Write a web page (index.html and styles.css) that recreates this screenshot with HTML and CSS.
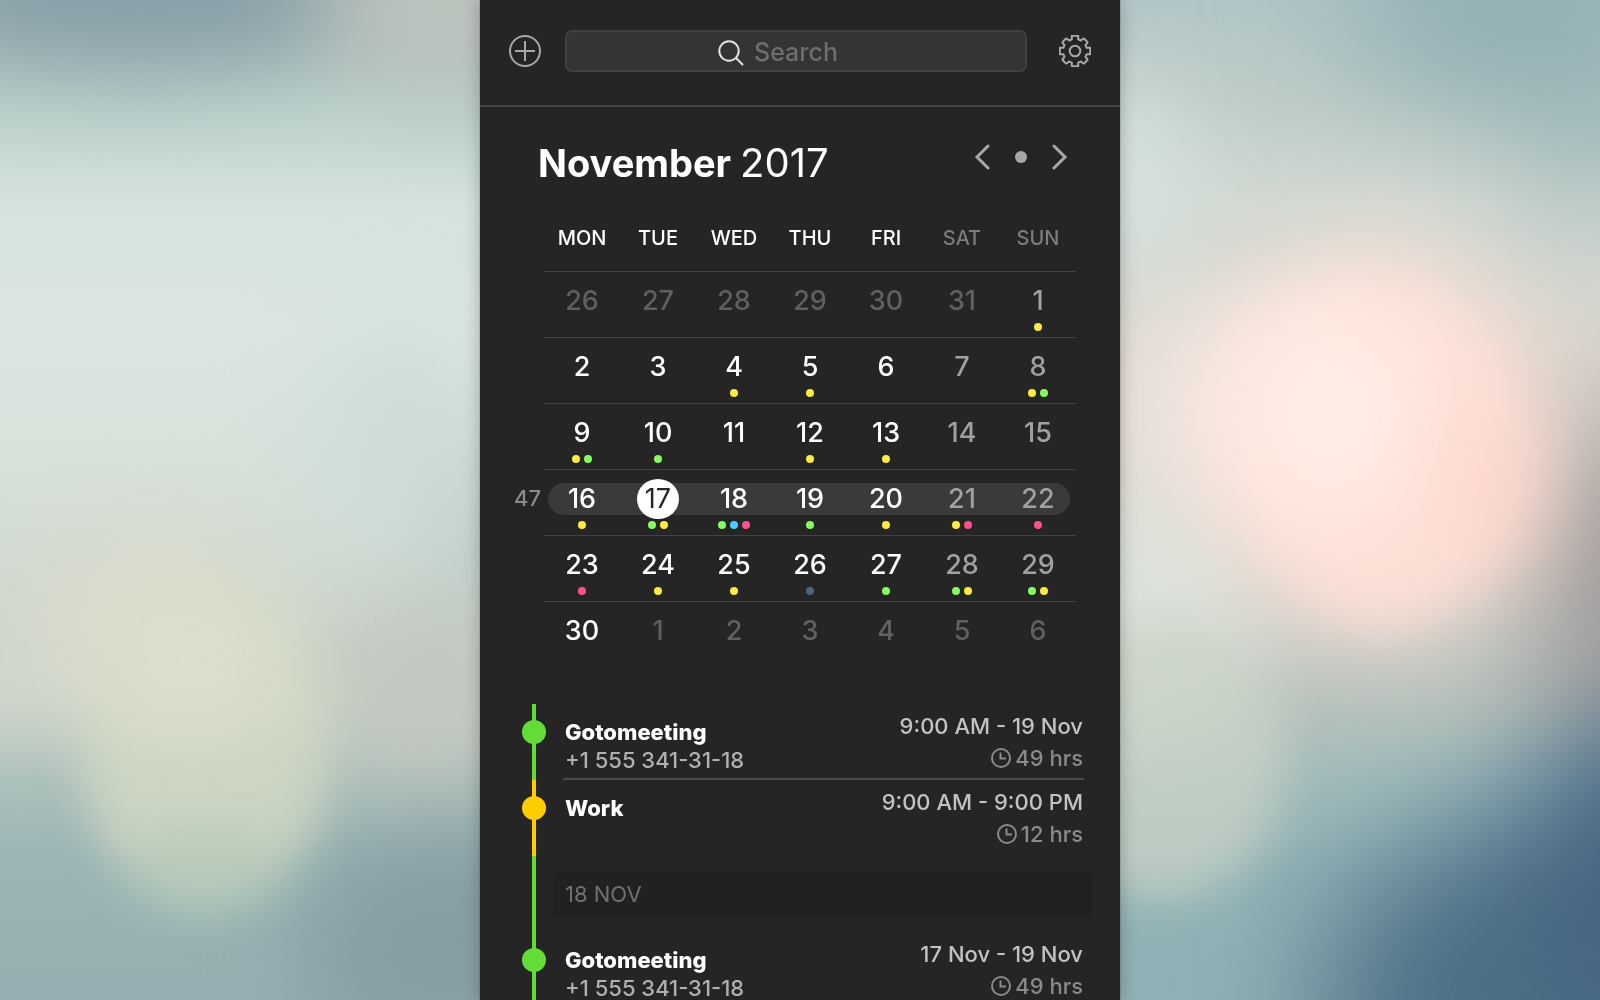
FILE: index.html
```html
<!DOCTYPE html>
<html lang="en">

<head>
    <meta charset="UTF-8">
    <meta name="viewport" content="width=device-width, initial-scale=1.0">
    <title>Calendar</title>
    <link rel="stylesheet" href="styles.css">
</head>

<body>
    <div class="wall">
        <svg viewBox="0 0 480 1000" preserveAspectRatio="none" aria-hidden="true">
            <defs>
                <linearGradient id="baseLeft" x1="0" y1="0" x2="0" y2="1">
                    <stop offset="0" stop-color="#a3b5b6" />
                    <stop offset="0.1" stop-color="#bacfca" />
                    <stop offset="0.2" stop-color="#d4e2dd" />
                    <stop offset="0.33" stop-color="#dce6e1" />
                    <stop offset="0.5" stop-color="#d6dfd7" />
                    <stop offset="0.7" stop-color="#c8d1c8" />
                    <stop offset="0.78" stop-color="#abbfbb" />
                    <stop offset="0.86" stop-color="#9bb5b5" />
                    <stop offset="1" stop-color="#95afb2" />
                </linearGradient>
                <filter id="soft" filterUnits="userSpaceOnUse" x="-300" y="-300" width="1080" height="1600" color-interpolation-filters="sRGB">
                    <feGaussianBlur stdDeviation="45" />
                </filter>
                <filter id="softer" filterUnits="userSpaceOnUse" x="-300" y="-300" width="1080" height="1700" color-interpolation-filters="sRGB">
                    <feGaussianBlur stdDeviation="65" />
                </filter>
                <filter id="disc" filterUnits="userSpaceOnUse" x="-300" y="-300" width="1080" height="1600" color-interpolation-filters="sRGB">
                    <feGaussianBlur stdDeviation="22" />
                </filter>
            </defs>
            <rect width="480" height="1000" fill="url(#baseLeft)" />
            <g filter="url(#soft)">
                <ellipse cx="140" cy="-10" rx="230" ry="75" fill="#859ca6" opacity="0.9" />
                <ellipse cx="450" cy="0" rx="130" ry="90" fill="#bcc3bd" />
                <ellipse cx="400" cy="430" rx="90" ry="120" fill="#cadcda" opacity="0.7" />
                <ellipse cx="490" cy="560" rx="60" ry="110" fill="#b8cac5" opacity="0.6" />
                <ellipse cx="420" cy="690" rx="90" ry="90" fill="#c2c7be" />
                <ellipse cx="450" cy="950" rx="150" ry="120" fill="#879da4" />
                <ellipse cx="20" cy="660" rx="80" ry="70" fill="#cfd6cc" />
                <ellipse cx="140" cy="620" rx="110" ry="80" fill="#dbdccd" />
            </g>
            <g filter="url(#disc)">
                <ellipse cx="205" cy="745" rx="125" ry="165" fill="#d0d8c3" opacity="0.85" />
                <ellipse cx="205" cy="870" rx="80" ry="40" fill="#afc5b6" opacity="0.6" />
            </g>
            <g filter="url(#soft)">
                <ellipse cx="190" cy="660" rx="90" ry="80" fill="#e3e2d0" opacity="0.7" />
            </g>
        </svg>
    </div>

    <main class="panel">
        <header class="toolbar">
            <button type="button" class="icon-btn" aria-label="Add event">
                <svg width="32" height="32" viewBox="-16 -16 32 32">
                    <circle r="15" />
                    <path d="M-10 0H10M0-10V10" />
                </svg>
            </button>
            <div class="search">
                <svg width="26" height="26" viewBox="0 0 26 26">
                    <circle cx="11" cy="11" r="9.7" />
                    <path d="M18 18L25 25" />
                </svg>
                <input type="text" placeholder="Search" aria-label="Search">
            </div>
            <button type="button" class="icon-btn" aria-label="Settings">
                <svg width="32" height="32" viewBox="-16 -16 32 32">
                    <circle r="5.3" />
                    <path d="M-3.2-15.2H3.2V-11.6L5.9-10.5 8-12.3Q8.7-12.8 9.3-12.2L12.2-9.3Q12.8-8.7 12.3-8L10.5-5.9 11.6-3.2H15.2V3.2H11.6L10.5 5.9 12.3 8Q12.8 8.7 12.2 9.3L9.3 12.2Q8.7 12.8 8 12.3L5.9 10.5 3.2 11.6V15.2H-3.2V11.6L-5.9 10.5-8 12.3Q-8.7 12.8-9.3 12.2L-12.2 9.3Q-12.8 8.7-12.3 8L-10.5 5.9-11.6 3.2H-15.2V-3.2H-11.6L-10.5-5.9-12.3-8Q-12.8-8.7-12.2-9.3L-9.3-12.2Q-8.7-12.8-8-12.3L-5.9-10.5-3.2-11.6Z" />
                </svg>
            </button>
        </header>

        <div class="month">
            <h1>November <span>2017</span></h1>
            <div class="month-nav">
                <button type="button" aria-label="Previous month">
                    <svg width="16" height="26" viewBox="0 0 16 26"><path d="M14 2L3 13L14 24" /></svg>
                </button>
                <button type="button" aria-label="Today"><span class="today-dot"></span></button>
                <button type="button" aria-label="Next month">
                    <svg width="16" height="26" viewBox="0 0 16 26"><path d="M2 2L13 13L2 24" /></svg>
                </button>
            </div>
        </div>

        <table class="calendar">
            <thead>
                <tr>
                    <td class="week"></td>
                    <th>MON</th>
                    <th>TUE</th>
                    <th>WED</th>
                    <th>THU</th>
                    <th>FRI</th>
                    <th class="weekend">SAT</th>
                    <th class="weekend">SUN</th>
                </tr>
            </thead>
            <tbody>
                <tr>
                    <td class="week"></td>
                    <td class="other"><div class="num">26</div></td>
                    <td class="other"><div class="num">27</div></td>
                    <td class="other"><div class="num">28</div></td>
                    <td class="other"><div class="num">29</div></td>
                    <td class="other"><div class="num">30</div></td>
                    <td class="other"><div class="num">31</div></td>
                    <td class="weekend"><div class="num">1</div><div class="dots"><i class="yellow"></i></div></td>
                </tr>
                <tr>
                    <td class="week"></td>
                    <td><div class="num">2</div></td>
                    <td><div class="num">3</div></td>
                    <td><div class="num">4</div><div class="dots"><i class="yellow"></i></div></td>
                    <td><div class="num">5</div><div class="dots"><i class="yellow"></i></div></td>
                    <td><div class="num">6</div></td>
                    <td class="weekend"><div class="num">7</div></td>
                    <td class="weekend"><div class="num">8</div><div class="dots"><i class="yellow"></i><i class="green"></i></div></td>
                </tr>
                <tr>
                    <td class="week"></td>
                    <td><div class="num">9</div><div class="dots"><i class="yellow"></i><i class="green"></i></div></td>
                    <td><div class="num">10</div><div class="dots"><i class="green"></i></div></td>
                    <td><div class="num">11</div></td>
                    <td><div class="num">12</div><div class="dots"><i class="yellow"></i></div></td>
                    <td><div class="num">13</div><div class="dots"><i class="yellow"></i></div></td>
                    <td class="weekend"><div class="num">14</div></td>
                    <td class="weekend"><div class="num">15</div></td>
                </tr>
                <tr class="current">
                    <td class="week"><div class="num">47</div></td>
                    <td class="first"><div class="num">16</div><div class="dots"><i class="yellow"></i></div></td>
                    <td><div class="num"><span class="today">17</span></div><div class="dots"><i class="green"></i><i class="yellow"></i></div></td>
                    <td><div class="num">18</div><div class="dots"><i class="green"></i><i class="blue"></i><i class="pink"></i></div></td>
                    <td><div class="num">19</div><div class="dots"><i class="green"></i></div></td>
                    <td><div class="num">20</div><div class="dots"><i class="yellow"></i></div></td>
                    <td class="weekend"><div class="num">21</div><div class="dots"><i class="yellow"></i><i class="pink"></i></div></td>
                    <td class="weekend last"><div class="num">22</div><div class="dots"><i class="pink"></i></div></td>
                </tr>
                <tr>
                    <td class="week"></td>
                    <td><div class="num">23</div><div class="dots"><i class="pink"></i></div></td>
                    <td><div class="num">24</div><div class="dots"><i class="yellow"></i></div></td>
                    <td><div class="num">25</div><div class="dots"><i class="yellow"></i></div></td>
                    <td><div class="num">26</div><div class="dots"><i class="navy"></i></div></td>
                    <td><div class="num">27</div><div class="dots"><i class="green"></i></div></td>
                    <td class="weekend"><div class="num">28</div><div class="dots"><i class="green"></i><i class="yellow"></i></div></td>
                    <td class="weekend"><div class="num">29</div><div class="dots"><i class="green"></i><i class="yellow"></i></div></td>
                </tr>
                <tr>
                    <td class="week"></td>
                    <td><div class="num">30</div></td>
                    <td class="other"><div class="num">1</div></td>
                    <td class="other"><div class="num">2</div></td>
                    <td class="other"><div class="num">3</div></td>
                    <td class="other"><div class="num">4</div></td>
                    <td class="other"><div class="num">5</div></td>
                    <td class="other"><div class="num">6</div></td>
                </tr>
            </tbody>
        </table>

        <ul class="agenda">
            <li class="event lime">
                <div class="rail"><span class="marker"></span></div>
                <div class="event-body divided">
                    <div class="what">
                        <h2>Gotomeeting</h2>
                        <p>+1 555 341-31-18</p>
                    </div>
                    <div class="when">
                        <p>9:00 AM - 19 Nov</p>
                        <p class="length">
                            <svg width="20" height="20" viewBox="0 0 20 20"><circle cx="10" cy="10" r="9" /><path d="M9.5 4.5V10.5H15" /></svg>
                            49 hrs
                        </p>
                    </div>
                </div>
            </li>
            <li class="event amber">
                <div class="rail"><span class="marker"></span></div>
                <div class="event-body">
                    <div class="what">
                        <h2>Work</h2>
                    </div>
                    <div class="when">
                        <p>9:00 AM - 9:00 PM</p>
                        <p class="length">
                            <svg width="20" height="20" viewBox="0 0 20 20"><circle cx="10" cy="10" r="9" /><path d="M9.5 4.5V10.5H15" /></svg>
                            12 hrs
                        </p>
                    </div>
                </div>
            </li>
            <li class="event lime">
                <div class="rail"></div>
                <h3 class="day">18 NOV</h3>
            </li>
            <li class="event lime">
                <div class="rail"><span class="marker"></span></div>
                <div class="event-body">
                    <div class="what">
                        <h2>Gotomeeting</h2>
                        <p>+1 555 341-31-18</p>
                    </div>
                    <div class="when">
                        <p>17 Nov - 19 Nov</p>
                        <p class="length">
                            <svg width="20" height="20" viewBox="0 0 20 20"><circle cx="10" cy="10" r="9" /><path d="M9.5 4.5V10.5H15" /></svg>
                            49 hrs
                        </p>
                    </div>
                </div>
            </li>
        </ul>
    </main>

    <div class="wall">
        <svg viewBox="0 0 480 1000" preserveAspectRatio="none" aria-hidden="true">
            <defs>
                <linearGradient id="baseRight" x1="0" y1="0" x2="0" y2="1">
                    <stop offset="0" stop-color="#b2c6c7" />
                    <stop offset="0.1" stop-color="#bfcdc9" />
                    <stop offset="0.2" stop-color="#d2d9d2" />
                    <stop offset="0.35" stop-color="#dcd7cf" />
                    <stop offset="0.55" stop-color="#d6d2ca" />
                    <stop offset="0.7" stop-color="#b9c3bd" />
                    <stop offset="0.78" stop-color="#a3bcbc" />
                    <stop offset="0.88" stop-color="#92b3b7" />
                    <stop offset="1" stop-color="#8fb0b4" />
                </linearGradient>
            </defs>
            <rect width="480" height="1000" fill="url(#baseRight)" />
            <g filter="url(#softer)">
                <ellipse cx="400" cy="10" rx="180" ry="90" fill="#8eacb2" />
                <ellipse cx="480" cy="130" rx="80" ry="90" fill="#9fb8ba" />
                <ellipse cx="520" cy="560" rx="100" ry="150" fill="#9d9797" />
                <ellipse cx="420" cy="1010" rx="220" ry="190" fill="#4d7086" />
                <ellipse cx="530" cy="880" rx="130" ry="180" fill="#456482" />
            </g>
            <g filter="url(#soft)">
                <ellipse cx="0" cy="180" rx="70" ry="100" fill="#d6e2de" />
                <ellipse cx="20" cy="610" rx="120" ry="140" fill="#dce2da" />
            </g>
            <g filter="url(#disc)">
                <ellipse cx="40" cy="760" rx="125" ry="140" fill="#c8d2c5" opacity="0.75" />
            </g>
            <g filter="url(#soft)">
                <ellipse cx="180" cy="410" rx="190" ry="130" fill="#f0e5e0" opacity="0.9" />
                <ellipse cx="255" cy="440" rx="160" ry="190" fill="#fde2d9" />
            </g>
            <g filter="url(#disc)">
                <ellipse cx="265" cy="460" rx="130" ry="165" fill="#fedfd6" opacity="0.6" />
            </g>
            <g filter="url(#soft)">
                <ellipse cx="370" cy="480" rx="45" ry="80" fill="#ffd0c4" opacity="0.8" />
                <ellipse cx="210" cy="410" rx="100" ry="110" fill="#ffede6" />
            </g>
        </svg>
    </div>
</body>

</html>
```
FILE: styles.css
```css
* {
    box-sizing: border-box;
}

body {
    margin: 0;
    height: 100vh;
    display: grid;
    grid-template-columns: 3fr 4fr 3fr;
    font-family: Inter, "Liberation Sans", sans-serif;
    color: #fff;
    overflow: hidden;
}

h1, h2, h3, p, ul {
    margin: 0;
    padding: 0;
}

button {
    padding: 0;
    border: none;
    background: none;
    cursor: pointer;
}

svg {
    display: block;
    fill: none;
    stroke: #a8a8a8;
}

/* blurred wallpaper on both sides */
.wall {
    min-width: 0;
    height: 100vh;
    overflow: hidden;
}

.wall svg {
    width: 100%;
    height: 100%;
    stroke: none;
}

.panel {
    position: relative;
    display: flex;
    flex-direction: column;
    min-width: 0;
    height: 100vh;
    background-color: #252525;
    box-shadow: 0 0 16px rgba(0, 0, 0, 0.25), 0 0 1px rgba(0, 0, 0, 0.6);
    overflow: hidden;
    z-index: 1;
}

.toolbar {
    display: flex;
    align-items: center;
    padding: 30px 29px 33px;
    border-bottom: 2px solid #454545;
}

.icon-btn svg {
    stroke-width: 2;
    stroke-linejoin: round;
}

.search {
    position: relative;
    flex: 1;
    margin: 0 32px 0 24px;
}

.search input {
    display: block;
    width: 100%;
    height: 42px;
    padding: 2px 0 0;
    border: 2px solid #404040;
    border-radius: 7px;
    background-color: #343434;
    color: #fff;
    font: 500 25px/30px Inter, "Liberation Sans", sans-serif;
    text-align: center;
}

.search input::placeholder {
    color: #6e6e6e;
    opacity: 1;
}

.search svg {
    position: absolute;
    left: calc(50% - 78px);
    top: 10px;
    stroke: #e2e2e2;
    stroke-width: 2;
}

.month {
    display: flex;
    align-items: center;
    justify-content: space-between;
    padding: 32px 52px 0 58px;
}

.month h1 {
    font-size: 38px;
    line-height: 48px;
    font-weight: 700;
}

.month h1 span {
    font-size: 40px;
    font-weight: 400;
}

.month-nav {
    display: flex;
    align-items: center;
    gap: 25px;
    padding-bottom: 12px;
}

.month-nav svg {
    stroke-width: 3;
    stroke-linecap: round;
}

.today-dot {
    display: block;
    width: 12px;
    height: 12px;
    border-radius: 50%;
    background-color: #a8a8a8;
}

.calendar {
    table-layout: fixed;
    width: calc(100% - 44px);
    margin-top: 24px;
    border-collapse: collapse;
}

.calendar th {
    height: 60px;
    padding: 0 0 6px;
    font-size: 20px;
    font-weight: 500;
}

.calendar td {
    height: 66px;
    padding: 13px 0 0;
    border-top: 1px solid #424242;
    vertical-align: top;
    font-size: 27px;
    font-weight: 500;
}

.calendar thead td {
    height: auto;
}

.calendar td.week {
    width: 64px;
    border: none;
    color: #8a8a8a;
    font-size: 22px;
}

.calendar .weekend {
    color: #a0a0a0;
}

.calendar th.weekend {
    color: #7c7c7c;
}

.calendar .other {
    color: #606060;
}

.num {
    display: flex;
    align-items: center;
    justify-content: center;
    height: 32px;
}

.week .num {
    justify-content: flex-end;
    padding-right: 3px;
}

.current td:not(.week) .num {
    background-color: #3a3a3a;
}

.current .first .num {
    margin-left: 4px;
    padding-right: 4px;
    border-radius: 16px 0 0 16px;
}

.current .last .num {
    margin-right: 6px;
    padding-left: 6px;
    border-radius: 0 16px 16px 0;
}

.today {
    flex: none;
    width: 42px;
    border-radius: 50%;
    background-color: #fff;
    color: #252525;
    line-height: 40px;
    text-align: center;
    font-weight: 400;
}

.dots {
    display: flex;
    justify-content: center;
    gap: 4px;
    margin-top: 6px;
}

.dots i {
    width: 8px;
    height: 8px;
    border-radius: 50%;
}

.yellow {
    background-color: #ffe944;
}

.green {
    background-color: #86fb60;
}

.blue {
    background-color: #4bcbff;
}

.pink {
    background-color: #ff5189;
}

.navy {
    background-color: #4d6384;
}

.agenda {
    margin-top: 37px;
    list-style: none;
    font-size: 22px;
    line-height: 28px;
    font-weight: 500;
}

.event {
    display: flex;
    height: 76px;
    padding: 0 36px 0 42px;
}

.rail {
    flex: none;
    width: 24px;
    padding-top: 16px;
    margin-right: 17px;
    background: linear-gradient(currentColor, currentColor) center / 4px 100% no-repeat;
}

.lime .rail {
    color: #64dc37;
}

.amber .rail {
    color: #ffcc00;
}

.marker {
    display: block;
    height: 24px;
    border-radius: 50%;
    background-color: currentColor;
}

.event-body {
    flex: 1;
    display: flex;
    justify-content: space-between;
    padding: 0 1px 0 2px;
    border-bottom: 2px solid transparent;
}

.divided {
    border-bottom-color: #4a4a4a;
}

.what {
    padding-top: 14px;
    color: #b0b0b0;
}

.what h2 {
    color: #fff;
    font-size: 22px;
    line-height: 28px;
    font-weight: 800;
}

.when {
    padding-top: 6px;
    color: #c2c2c2;
    text-align: right;
    line-height: 32px;
}

.length {
    display: flex;
    align-items: center;
    justify-content: flex-end;
    gap: 4px;
    color: #8a8a8a;
}

.length svg {
    stroke: #8a8a8a;
    stroke-width: 2;
}

.day {
    flex: 1;
    margin: 16px -8px 14px -10px;
    padding-left: 12px;
    border-radius: 6px;
    background-color: #212121;
    color: #707070;
    font-size: 22px;
    line-height: 44px;
    font-weight: 400;
}
```
